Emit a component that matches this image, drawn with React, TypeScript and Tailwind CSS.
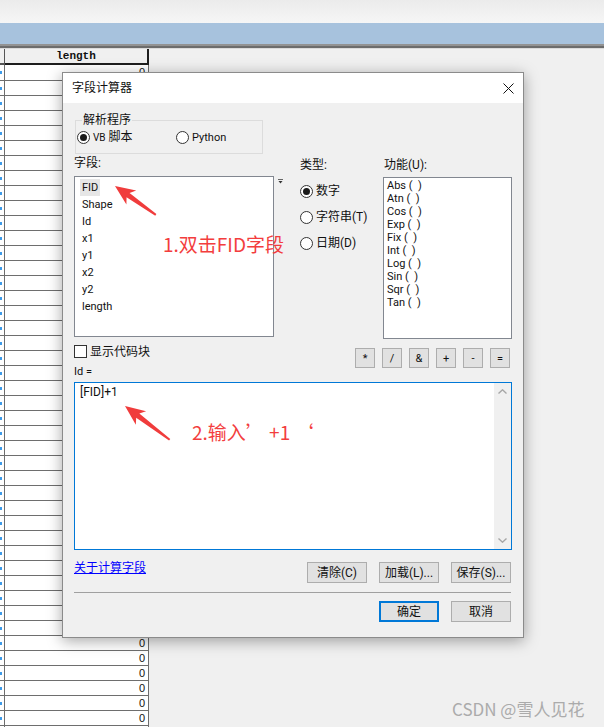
import React from "react";

const fields = ["FID", "Shape", "Id", "x1", "y1", "x2", "y2", "length"];
const types = ["数字", "字符串(T)", "日期(D)"];
const funcs = ["Abs", "Atn", "Cos", "Exp", "Fix", "Int", "Log", "Sin", "Sqr", "Tan"];
const ops = ["*", "/", "&", "+", "-", "="];

const Radio = ({ checked }: { checked?: boolean }) => (
  <span className="flex h-[13px] w-[13px] shrink-0 items-center justify-center rounded-full border border-[#333] bg-white">
    {checked && <span className="h-[7px] w-[7px] rounded-full bg-[#1a1a1a]" />}
  </span>
);

const Btn = ({ label, primary }: { label: string; primary?: boolean }) => (
  <div
    className={
      primary
        ? "flex h-[21px] w-[60px] items-center justify-center border-2 border-[#0078d7] bg-[#e1e1e1] leading-none"
        : "flex h-[21px] w-[60px] items-center justify-center border border-[#adadad] bg-[#e1e1e1] leading-none"
    }
  >
    {label}
  </div>
);

const Chevron = ({ up }: { up?: boolean }) => (
  <svg width="9" height="5" viewBox="0 0 9 5">
    <path
      d={up ? "M0.5 4.5L4.5 0.8L8.5 4.5" : "M0.5 0.5L4.5 4.2L8.5 0.5"}
      fill="none"
      stroke="#a6a6a6"
      strokeWidth="1.4"
    />
  </svg>
);

const Arrow = ({ x, y, angle, len }: { x: number; y: number; angle: number; len: number }) => (
  <g transform={`translate(${x} ${y}) rotate(${angle})`}>
    <polygon
      points={`0,0 20,-8.5 16,-2.6 ${len},-1 ${len},1 16,2.6 20,8.5`}
      fill="#f03c3c"
    />
  </g>
);

export default function App() {
  const rows = Array.from({ length: 45 }, (_, i) => i);
  // rows 1..37 sit under the dialog, the last one is cut by the window
  const showValue = (i: number) => i === 0 || (i >= 38 && i < 44);

  return (
    <div className="relative h-[727px] w-[604px] overflow-hidden bg-[#f0f0f0] font-['Roboto','Noto_Sans_CJK_SC',sans-serif] text-[12px] text-[#111]">
      {/* window chrome */}
      <div className="h-[23px] bg-gradient-to-b from-[#ebebeb] to-[#f6f6f6]" />
      <div className="h-[21px] bg-[#a7c2dd]" />
      <div className="h-[2px] bg-[#929292]" />
      <div className="h-[2px] bg-[#6c6c6c]" />
      <div className="h-px bg-[#dadada]" />

      {/* attribute table */}
      <div className="flex flex-col">
        <div className="flex h-[16px]">
          <div className="w-[5px] border-b-2 border-r border-[#555] bg-[#f0f0f0]" />
          <div className="flex w-[144px] items-center justify-center border-b-2 border-r-2 border-[#1e1e1e] bg-[#f0f0f0] font-['Liberation_Mono',monospace] text-[11px] font-bold leading-none">
            length
          </div>
        </div>
        {rows.map((i) => (
          <div key={i} className="flex h-[15px]">
            <div className={i === 0 ? "flex w-[5px] items-center border-r border-[#6e6e6e] bg-white" : "flex w-[5px] items-center border-r border-t border-[#6e6e6e] bg-white"}>
              <span className="h-[3px] w-[2px] bg-[#3d9be9]" />
            </div>
            <div className={i === 0 ? "flex w-[144px] items-center justify-end border-r border-[#6e6e6e] bg-white pr-[3px] font-['Liberation_Sans',sans-serif] text-[11px] leading-none" : "flex w-[144px] items-center justify-end border-r border-t border-[#6e6e6e] bg-white pr-[3px] font-['Liberation_Sans',sans-serif] text-[11px] leading-none"}>
              {showValue(i) ? "0" : ""}
            </div>
          </div>
        ))}
      </div>

      {/* field calculator dialog */}
      <div className="absolute left-[62px] top-[72px] flex h-[566px] w-[462px] flex-col border border-[#8b8b8b] bg-[#f0f0f0] shadow-[0_3px_14px_rgba(0,0,0,0.35)]">
        <div className="flex h-[30px] items-center justify-between bg-white px-[9px]">
          <span className="leading-[16px]">字段计算器</span>
          <svg width="11" height="11" viewBox="0 0 11 11">
            <path d="M0.5 0.5L10.5 10.5M10.5 0.5L0.5 10.5" stroke="#111" strokeWidth="1" />
          </svg>
        </div>

        <div className="flex flex-col px-[11px]">
          {/* parser group */}
          <div className="relative ml-px mt-[17px] flex h-[34px] w-[188px] items-start border border-[#dcdcdc] pl-px pt-[10px]">
            <span className="absolute left-[6px] top-[-9px] bg-[#f0f0f0] px-px leading-[16px]">解析程序</span>
            <label className="flex w-[99px] items-center gap-[3px]">
              <Radio checked />
              <span className="leading-[13px]">
                <span className="text-[10px]">VB</span> 脚本
              </span>
            </label>
            <label className="flex items-center gap-[3px]">
              <Radio />
              <span className="text-[11px] leading-[13px]">Python</span>
            </label>
          </div>

          {/* fields / type / functions */}
          <div className="mt-px flex">
            <div className="flex w-[200px] flex-col">
              <span className="leading-[16px]">字段:</span>
              <div className="mt-[5px] flex h-[161px] flex-col items-start border border-[#828790] bg-white pl-[5px] pt-[2px]">
                {fields.map((f, i) => (
                  <span
                    key={f}
                    className={
                      i === 0
                        ? "h-[17px] bg-[#e6e6e6] px-[2px] text-[11px] leading-[17px]"
                        : "h-[17px] px-[2px] text-[11px] leading-[17px]"
                    }
                  >
                    {f}
                  </span>
                ))}
              </div>
            </div>

            <div className="w-[26px] pl-[4px] pt-[24px]">
              <svg width="5" height="5" viewBox="0 0 5 5">
                <path d="M0 0.5H5" stroke="#666" strokeWidth="1" />
                <path d="M0.5 2L4.5 2L2.5 4.5Z" fill="#333" />
              </svg>
            </div>

            <div className="flex w-[83px] flex-col pt-[2px]">
              <span className="leading-[16px]">类型:</span>
              <div className="mt-[10px] flex flex-col gap-[10px]">
                {types.map((t, i) => (
                  <label key={t} className="flex h-[16px] items-center gap-[3px]">
                    <Radio checked={i === 0} />
                    <span className="leading-[16px]">{t}</span>
                  </label>
                ))}
              </div>
            </div>

            <div className="flex w-[129px] flex-col pt-[2px]">
              <span className="pl-px leading-[16px]">功能(U):</span>
              <div className="mt-[4px] flex h-[162px] flex-col border border-[#828790] bg-white pl-[3px] pt-px">
                {funcs.map((f) => (
                  <span key={f} className="h-[13px] text-[11px] leading-[13px]">
                    {f} ({"\u00a0\u00a0"})
                  </span>
                ))}
              </div>
            </div>
          </div>

          {/* code block toggle + operators */}
          <div className="mt-[6px] flex items-start justify-between">
            <div className="flex flex-col">
              <div className="flex h-[13px] items-center gap-[3px]">
                <span className="h-[13px] w-[13px] border border-[#333] bg-white" />
                <span className="leading-[16px]">显示代码块</span>
              </div>
              <span className="mt-[6px] text-[11px] leading-[16px]">Id =</span>
            </div>
            <div className="mr-[2px] mt-[3px] flex gap-[7px]">
              {ops.map((o) => (
                <div
                  key={o}
                  className="flex h-[20px] w-[20px] items-center justify-center border border-[#adadad] bg-[#e1e1e1] text-[11px] leading-none"
                >
                  {o}
                </div>
              ))}
            </div>
          </div>

          {/* expression */}
          <div className="mt-[2px] flex h-[168px] border border-[#0078d7] bg-white">
            <div className="flex-1 pl-[5px] pt-px text-[12px] leading-[16px]">[FID]+1</div>
            <div className="flex w-[17px] flex-col items-center justify-between bg-[#f0f0f0] py-[6px]">
              <Chevron up />
              <Chevron />
            </div>
          </div>

          <div className="mt-[12px] flex items-start justify-between">
            <span className="-mt-[2px] leading-[16px] text-[#0000ff] underline">关于计算字段</span>
            <div className="mr-px flex gap-[12px]">
              <Btn label="清除(C)" />
              <Btn label="加载(L)..." />
              <Btn label="保存(S)..." />
            </div>
          </div>

          <div className="mr-px mt-[9px] h-px bg-[#a0a0a0]" />

          <div className="mr-px mt-[8px] flex justify-end gap-[12px]">
            <Btn label="确定" primary />
            <Btn label="取消" />
          </div>
        </div>
      </div>

      {/* annotations */}
      <svg className="pointer-events-none absolute left-0 top-0" width="604" height="727">
        <Arrow x={115} y={186} angle={35.3} len={50} />
        <Arrow x={125} y={406} angle={37.1} len={56} />
      </svg>
      <span className="absolute left-[163px] top-[232px] font-['Noto_Sans_CJK_SC',sans-serif] text-[19px] leading-[24px] text-[#f33d3d]">
        1.双击FID字段
      </span>
      <span className="absolute left-[192px] top-[420px] font-['Noto_Sans_CJK_SC',sans-serif] text-[19px] leading-[24px] text-[#f33d3d]">
        2.输入’ +1 ‘
      </span>
      <span className="absolute left-[452px] top-[698px] font-['Noto_Sans_CJK_SC',sans-serif] text-[17px] leading-[22px] text-[#ababab]">
        CSDN @雪人见花
      </span>
    </div>
  );
}
